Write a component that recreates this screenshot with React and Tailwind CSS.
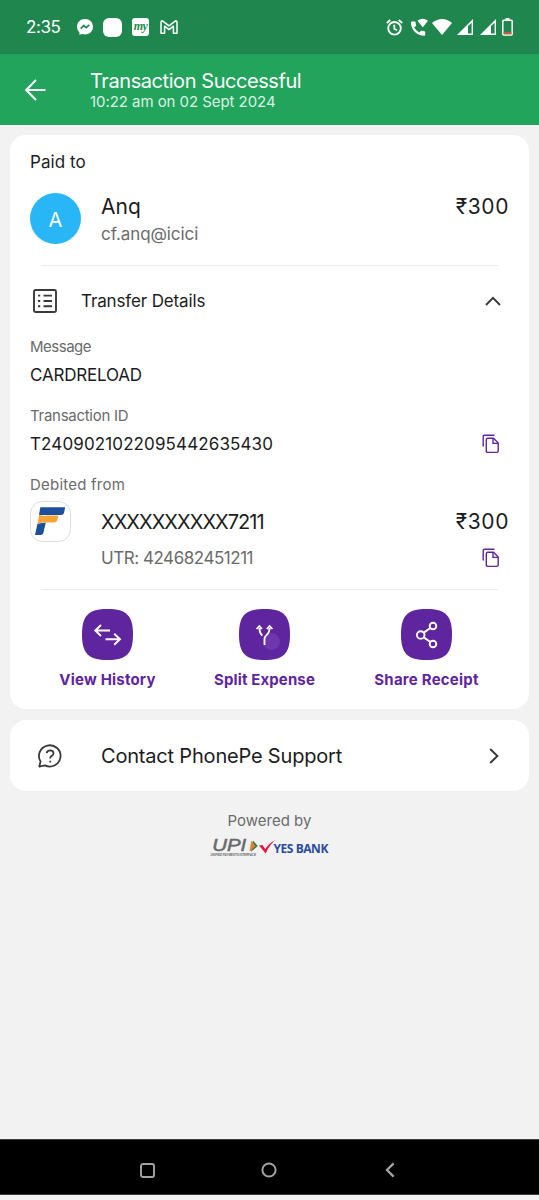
function Squircle({ children }) {
  return (
    <svg className="size-[51px]" viewBox="0 0 51 51" fill="none">
      <path d="M25.5 0C44.5 0 51 6.5 51 25.5S44.5 51 25.5 51 0 44.5 0 25.5 6.5 0 25.5 0Z" fill="#5f259f" />
      {children}
    </svg>
  );
}

function CopyIcon() {
  return (
    <svg className="h-5 w-[18px]" viewBox="0 0 18 20" fill="none" stroke="#5f259f" strokeWidth="1.4" strokeLinejoin="round">
      <path d="M1.2 12.5V2.7Q1.2 1.2 2.7 1.2H12.5" />
      <path d="M5.7 4.3H11.6L16.2 9V17Q16.2 18.4 14.8 18.4H5.7Q4.3 18.4 4.3 17V5.7Q4.3 4.3 5.7 4.3Z" />
      <path d="M11 4.6V9.4H16" />
    </svg>
  );
}

function Signal() {
  return (
    <svg className="size-4" viewBox="0 0 16 16">
      <path d="M0 16L16 0V16Z" fill="#fff" />
      <path d="M11 7.2L14.6 3.7V14.4H11Z" fill="#1f874e" />
    </svg>
  );
}

function StatusBar() {
  return (
    <div className="flex h-[54px] items-center bg-[#1f874e] pl-[26px] pr-[26px] text-white">
      <span className="w-[51px] pt-[2px] text-[17px] tracking-[-0.4px]">2:35</span>
      <svg className="size-4" viewBox="0 0 16 16">
        <path d="M8 0C3.4 0 0 3.3 0 7.7 0 10 .9 12 2.4 13.3V15.8L4.9 14.9C5.9 15.2 6.9 15.4 8 15.4 12.6 15.4 16 12 16 7.7S12.6 0 8 0Z" fill="#fff" />
        <path d="M3.7 9.6L6.7 6.5 9.2 8.7 12.3 5.8" stroke="#1f874e" strokeWidth="1.7" fill="none" strokeLinejoin="round" />
      </svg>
      <div className="ml-[10px] size-[19px] rounded-[6px] bg-white" />
      <div className="ml-[10px] flex h-[18px] w-[17px] items-center justify-center rounded-[3px] bg-white pb-[3px] font-['Liberation_Serif'] text-[12px] font-bold italic leading-none tracking-[-0.5px] text-[#1f874e]">my</div>
      <svg className="ml-[11px] h-[14px] w-[18px]" viewBox="0 0 18 14" fill="none" stroke="#fff" strokeWidth="1.5" strokeLinejoin="round">
        <path d="M1 2.3Q1 .8 2.5 .8L9 5.8 15.5 .8Q17 .8 17 2.3V13.2H13.4V6.2L9 9.6 4.6 6.2V13.2H1Z" />
      </svg>
      <div className="flex-1" />
      <svg className="size-[17px]" viewBox="0 0 17 17" fill="none" stroke="#fff" strokeWidth="1.8">
        <circle cx="8.5" cy="9.3" r="6.3" />
        <path d="M8.3 5.8V9.8L11 11.2M.8 4L4.3 1M16.2 4L12.7 1" />
      </svg>
      <svg className="ml-[7px] size-[19px]" viewBox="0 0 19 19" fill="#fff">
        <path d="M1 4.4Q1 3.5 1.9 3.5H4.8Q5.6 3.5 5.6 4.3 5.7 5.8 6.1 7 6.3 7.6 5.9 8L4.2 9.6Q6 12.8 9.2 14.6L10.8 12.9Q11.2 12.5 11.8 12.7 13 13.1 14.4 13.2 15.2 13.2 15.2 14V16.8Q15.2 17.7 14.3 17.7C7 17.7 1 11.7 1 4.4Z" />
        <path d="M7.5 2.8Q12.8-1.2 18 2.8L12.8 9.2Z" />
      </svg>
      <svg className="ml-[3px] h-4 w-5" viewBox="0 0 20 16" fill="#fff">
        <path d="M0 4Q10-4 20 4L10 16Z" />
      </svg>
      <div className="ml-[5px] flex gap-[7px]"><Signal /><Signal /></div>
      <svg className="ml-[6px] h-[18px] w-[11px]" viewBox="0 0 11 18" fill="none">
        <path d="M3.5 0H7.5V2H3.5Z" fill="#fff" />
        <rect x=".8" y="2.3" width="9.4" height="14.7" rx="1" stroke="#fff" strokeWidth="1.5" />
        <path d="M1.6 14.3H9.4V16.3H1.6Z" fill="#e0573f" />
      </svg>
    </div>
  );
}

function Header() {
  return (
    <div className="flex h-[71px] items-start bg-[#22a45d] text-white">
      <svg className="ml-[25px] mt-[25px] h-[22px] w-[21px]" viewBox="0 0 21 22" fill="none" stroke="#fff" strokeWidth="2">
        <path d="M20.5 11H1.5M11 1L1.2 11 11 21" />
      </svg>
      <div className="ml-[44px] mt-[15px]">
        <div className="text-[20px] leading-6 tracking-[-0.43px]">Transaction Successful</div>
        <div className="-mt-px text-[15px] leading-5 tracking-[-0.06px] text-[#d9f2e3]">10:22 am on 02 Sept 2024</div>
      </div>
    </div>
  );
}

function Action({ label, labelClass, className, children }) {
  return (
    <div className={"flex flex-col items-center " + className}>
      <Squircle>{children}</Squircle>
      <div className={"mt-[10px] whitespace-nowrap text-[15px] font-bold leading-5 text-[#5f259f] " + labelClass}>{label}</div>
    </div>
  );
}

function Details() {
  return (
    <div className="mx-[10px] mt-[10px] rounded-[16px] bg-white px-5 pb-[19px] pt-[17px] text-[#1c1c1e]">
      <div className="text-[17px] leading-5 tracking-[0.05px]">Paid to</div>

      <div className="mt-[21px] flex h-[54px]">
        <div className="flex size-[51px] items-center justify-center rounded-full bg-[#29b6f6] pt-[2px] text-[20px] text-white">A</div>
        <div className="ml-5 flex-1 pt-px">
          <div className="text-[21px] leading-[26px]">Anq</div>
          <div className="text-[17px] leading-[28px] tracking-[-0.08px] text-[#6b6b6b]">cf.anq@icici</div>
        </div>
        <div className="pt-px text-[21px] leading-[26px] tracking-[0.6px]">₹300</div>
      </div>

      <div className="ml-[11px] mr-[11px] mt-[18px] h-px bg-[#ececec]" />

      <div className="flex h-[70px] items-center">
        <svg className="ml-[3px] size-6" viewBox="0 0 24 24" fill="none" stroke="#3a3a3c" strokeWidth="1.9">
          <rect x="1" y="1" width="22" height="22" rx="1.5" />
          <path d="M5 6.6H7.2M10.5 6.6H19M5 12H7.2M10.5 12H19M5 17.2H7.2M10.5 17.2H19" />
        </svg>
        <div className="ml-6 flex-1 pt-[2px] text-[17px] tracking-[-0.13px]">Transfer Details</div>
        <svg className="mr-2 h-[10px] w-4" viewBox="0 0 16 10" fill="none" stroke="#3a3a3c" strokeWidth="1.9">
          <path d="M1 9L8 1.8 15 9" />
        </svg>
      </div>

      <div className="mt-px text-[15px] leading-5 tracking-[-0.5px] text-[#6b6b6b]">Message</div>
      <div className="mt-[9px] text-[17px] leading-[19px] tracking-[-0.2px]">CARDRELOAD</div>

      <div className="mt-[21px] text-[15px] leading-5 tracking-[-0.28px] text-[#6b6b6b]">Transaction ID</div>
      <div className="mt-2 flex h-5 items-center justify-between">
        <div className="text-[17px] leading-5 tracking-[0.12px]">T2409021022095442635430</div>
        <div className="pr-[9px]"><CopyIcon /></div>
      </div>

      <div className="mt-[21px] text-[15px] leading-5 tracking-[0.22px] text-[#6b6b6b]">Debited from</div>
      <div className="mt-[6px] flex h-[41px] items-center">
        <svg className="size-[41px]" viewBox="0 0 41 41">
          <rect x=".5" y=".5" width="40" height="40" rx="12" fill="#fff" stroke="#dcdce0" />
          <path d="M10.3 6.3H35.2L34 12Q33.5 14 31 14H9Z" fill="#1d4f9c" />
          <path d="M9.2 13.7Q12 15.2 17 14.5H28.5L27.2 19.2Q26.5 21.4 24 21.4H13Q9 21.5 7.4 23.3Z" fill="#f3a536" />
          <path d="M7.3 23.3Q9.5 21.6 15.8 21.7L13.3 32Q12.8 34 10.5 34H5Z" fill="#1d4f9c" />
        </svg>
        <div className="ml-[30px] flex-1 text-[20px] leading-6 tracking-[-0.97px]">XXXXXXXXXX7211</div>
        <div className="pt-px text-[21px] leading-6 tracking-[0.6px]">₹300</div>
      </div>
      <div className="mt-[6px] flex h-5 items-center justify-between">
        <div className="ml-[71px] text-[17px] leading-5 tracking-[-0.46px] text-[#6b6b6b]">UTR: 424682451211</div>
        <div className="pr-[9px]"><CopyIcon /></div>
      </div>

      <div className="ml-[11px] mr-[11px] mt-[21px] h-px bg-[#ececec]" />

      <div className="mt-[19px] flex">
        <Action label="View History" labelClass="tracking-[0.2px]" className="ml-[29px] w-[97px]">
          <path d="M28 21.5H14M19 16L13.3 21.5 19 27M23.5 30.3H37M32.2 24.8L38 30.3 32.2 35.8" stroke="#fff" strokeWidth="1.9" />
        </Action>
        <Action label="Split Expense" labelClass="tracking-[0.12px]" className="ml-[57px] w-[103px]">
          <circle cx="32.5" cy="32.5" r="8.5" fill="#7036b0" />
          <path d="M25.5 36V30Q25.5 28 27.5 26.2 30.6 23.5 30.6 19M23.3 26.6Q20.5 24 20.4 19M17.6 20L20.3 17 23 20M27.8 20L30.6 17 33.4 20" stroke="#fff" strokeWidth="1.8" />
        </Action>
        <Action label="Share Receipt" labelClass="tracking-[0.22px]" className="ml-[57px] w-[107px]">
          <g stroke="#fff" strokeWidth="1.9">
            <circle cx="19.7" cy="26" r="3.8" />
            <circle cx="32" cy="17" r="3.3" />
            <circle cx="32" cy="35" r="3.3" />
            <path d="M22.8 23.6L29.3 19M22.8 28.4L29.3 33" />
          </g>
        </Action>
      </div>
    </div>
  );
}

function Support() {
  return (
    <div className="mx-[10px] mt-[11px] flex h-[71px] items-center rounded-[16px] bg-white text-[#1c1c1e]">
      <svg className="ml-7 size-6" viewBox="0 0 24 24" fill="none" stroke="#3a3a3c" strokeWidth="1.8" strokeLinejoin="round">
        <path d="M1.2 22.6L2.6 17.5A10.8 10.6 0 1 1 7 21.4Z" />
        <path d="M8.7 9.2Q9 6.3 12.2 6.3 15.5 6.5 15.5 9.2 15.5 11 13.5 12.1 12.2 12.9 12.2 14.6" />
        <path d="M12.2 16.8V18.5" />
      </svg>
      <div className="ml-[39px] flex-1 pt-px text-[20px] tracking-[-0.19px]">Contact PhonePe Support</div>
      <svg className="mr-[30px] h-4 w-[10px]" viewBox="0 0 10 16" fill="none" stroke="#3a3a3c" strokeWidth="1.9">
        <path d="M1.2 1L8.4 8 1.2 15" />
      </svg>
    </div>
  );
}

function PoweredBy() {
  return (
    <div className="mt-[20px] flex flex-col items-center">
      <div className="text-[15px] leading-5 text-[#6b6b6b]">Powered by</div>
      <div className="mt-2 flex h-[18px] w-[118px] items-start">
        <div className="flex w-[48px] flex-col">
          <div className="flex h-[13px] items-center">
            <div className="w-[38px] origin-left scale-x-[1.2] pl-[1px] font-['Liberation_Sans'] text-[17px] italic leading-[13px] text-[#68696c] [-webkit-text-stroke:0.5px_#68696c]">UPI</div>
            <svg className="h-3 w-[9px]" viewBox="0 0 9 12">
              <path d="M4 .5L8.8 6 2 11.7Z" fill="#18854a" />
              <path d="M2.5 .5L6.5 6 .3 11.7Z" fill="#ef7d31" />
            </svg>
          </div>
          <div className="mt-[2px] h-[3px] w-[44px] whitespace-nowrap font-['Liberation_Sans'] text-[3px] font-bold italic leading-[3px] tracking-[-0.06px] text-[#68696c]">UNIFIED PAYMENTS INTERFACE</div>
        </div>
        <svg className="mt-[1px] h-[14px] w-4" viewBox="0 0 16 14">
          <path d="M0 5.5L3.5 5 6.3 9.2Q9.5 3.5 16 .2 10 5.5 6.7 13.5Z" fill="#e3173e" />
        </svg>
        <div className="-ml-[1px] mt-[3px] whitespace-nowrap font-['Open_Sans'] text-[12px] font-bold leading-[14px] tracking-[-0.45px] text-[#2c4ba0]">YES BANK</div>
      </div>
    </div>
  );
}

export default function App() {
  return (
    <div className="flex h-[1200px] w-[539px] flex-col overflow-hidden bg-[#f2f2f2] font-['Inter','Noto_Sans',sans-serif]">
      <StatusBar />
      <Header />
      <Details />
      <Support />
      <PoweredBy />
      <div className="flex-1" />
      <div className="mb-[5px] flex h-[56px] items-center border-y border-[#3a3d3b] bg-black pt-[6px]">
        <svg className="ml-[140px] size-[15px]" viewBox="0 0 15 15" fill="none" stroke="#a3a3a3" strokeWidth="1.9">
          <rect x="1" y="1" width="13" height="13" rx="2" />
        </svg>
        <svg className="ml-[106px] size-4" viewBox="0 0 16 16" fill="none" stroke="#a3a3a3" strokeWidth="2">
          <circle cx="8" cy="8" r="6.6" />
        </svg>
        <svg className="ml-[108px] h-4 w-[10px]" viewBox="0 0 10 16" fill="none" stroke="#a3a3a3" strokeWidth="2.3">
          <path d="M8.6 1.4L2 8 8.6 14.6" />
        </svg>
      </div>
    </div>
  );
}
